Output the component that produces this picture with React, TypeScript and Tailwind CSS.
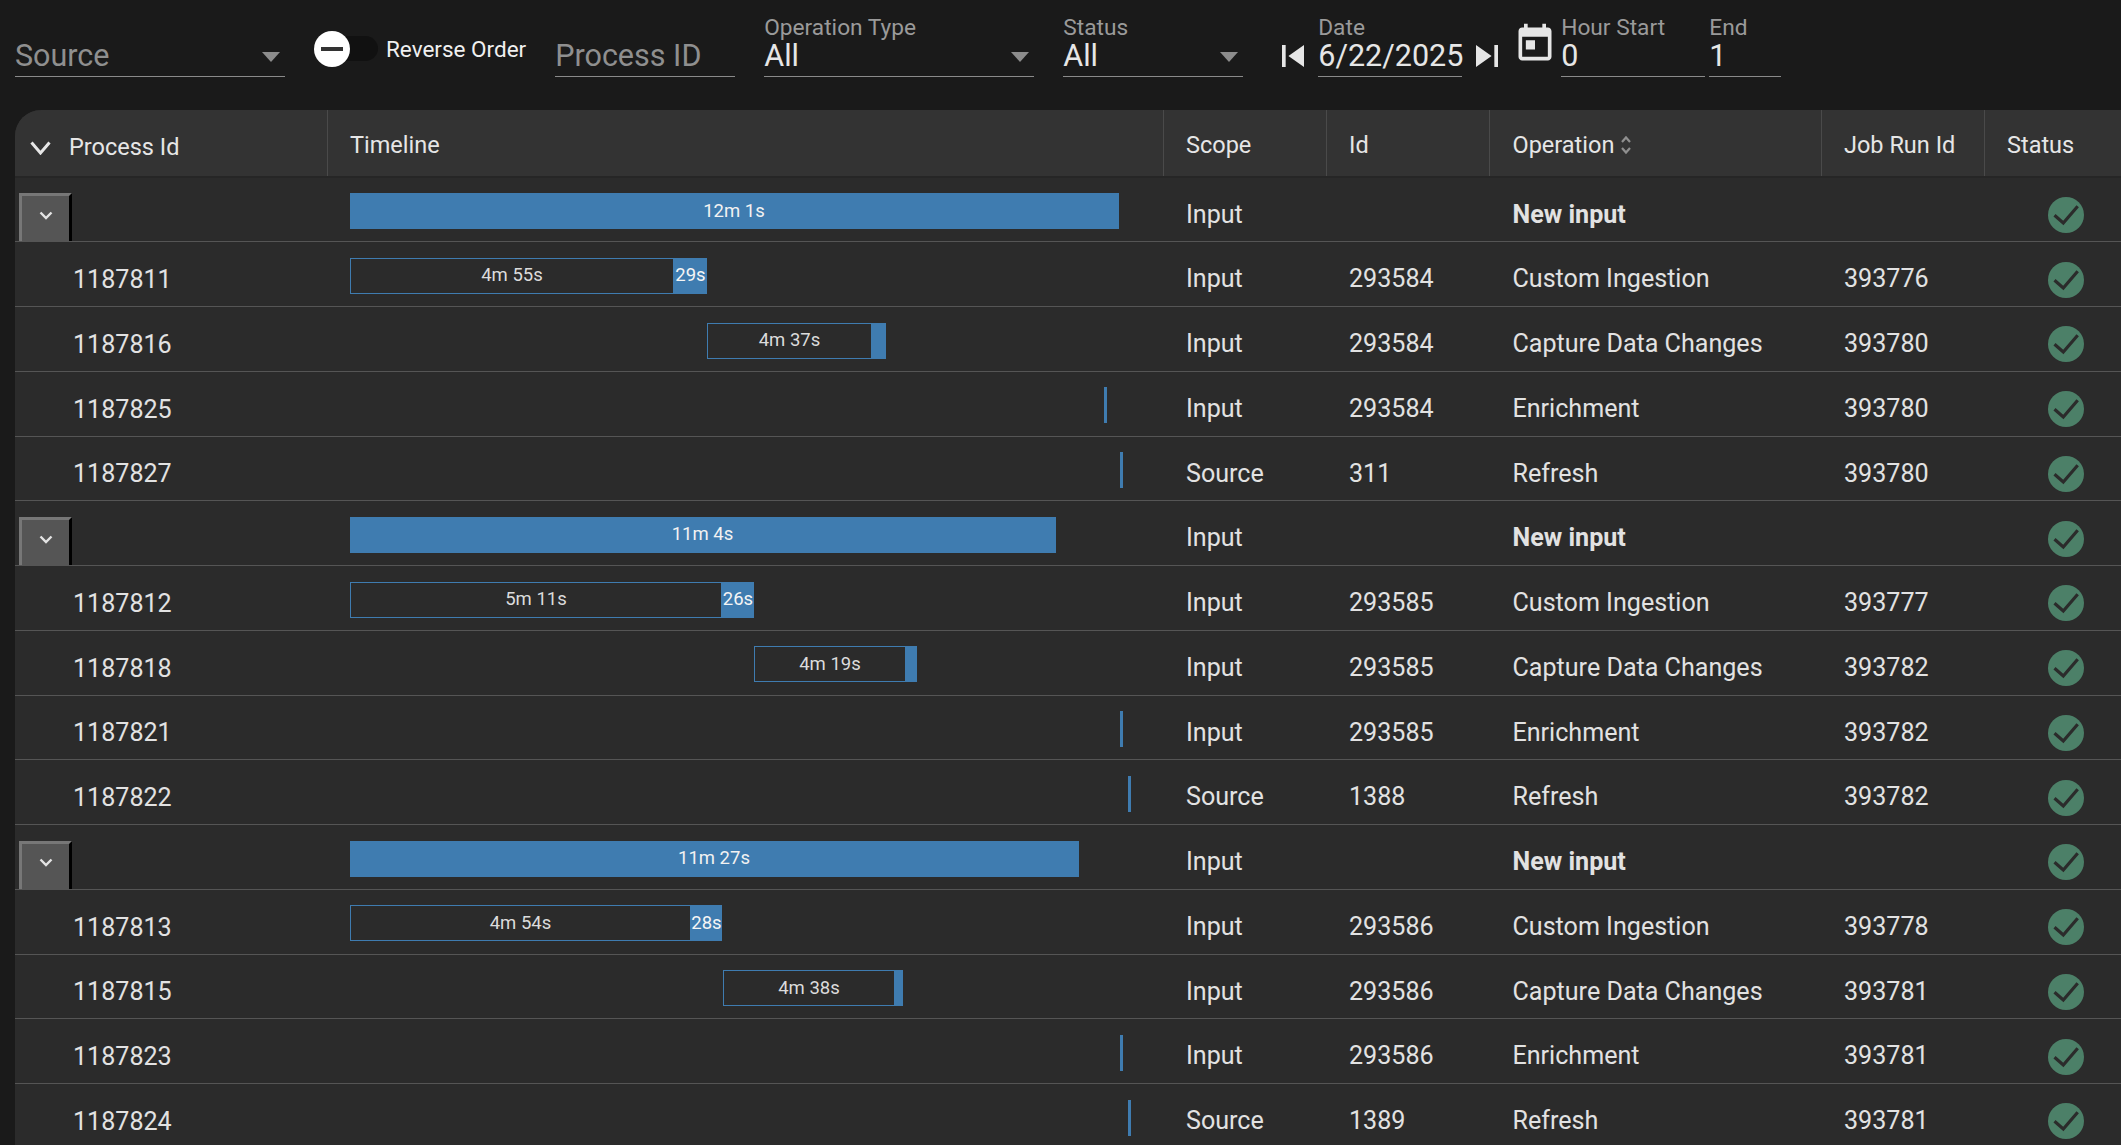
import React from "react";

type Bar =
  | { kind: "full"; cls: string; label: string }
  | { kind: "split"; outer: string; inner: string; fill: string; label: string; fillLabel?: string }
  | { kind: "tick"; cls: string };

type Row = {
  group?: boolean;
  pid?: string;
  bar: Bar;
  scope: string;
  id?: string;
  op: string;
  job?: string;
};

const rows: Row[] = [
  { group: true, bar: { kind: "full", cls: "w-[769px]", label: "12m 1s" }, scope: "Input", op: "New input" },
  { pid: "1187811", bar: { kind: "split", outer: "ml-0", inner: "w-[324px]", fill: "w-[33px]", label: "4m 55s", fillLabel: "29s" }, scope: "Input", id: "293584", op: "Custom Ingestion", job: "393776" },
  { pid: "1187816", bar: { kind: "split", outer: "ml-[357px]", inner: "w-[165px]", fill: "w-[14px]", label: "4m 37s" }, scope: "Input", id: "293584", op: "Capture Data Changes", job: "393780" },
  { pid: "1187825", bar: { kind: "tick", cls: "ml-[754px]" }, scope: "Input", id: "293584", op: "Enrichment", job: "393780" },
  { pid: "1187827", bar: { kind: "tick", cls: "ml-[770px]" }, scope: "Source", id: "311", op: "Refresh", job: "393780" },
  { group: true, bar: { kind: "full", cls: "w-[706px]", label: "11m 4s" }, scope: "Input", op: "New input" },
  { pid: "1187812", bar: { kind: "split", outer: "ml-0", inner: "w-[372px]", fill: "w-[32px]", label: "5m 11s", fillLabel: "26s" }, scope: "Input", id: "293585", op: "Custom Ingestion", job: "393777" },
  { pid: "1187818", bar: { kind: "split", outer: "ml-[404px]", inner: "w-[152px]", fill: "w-[11px]", label: "4m 19s" }, scope: "Input", id: "293585", op: "Capture Data Changes", job: "393782" },
  { pid: "1187821", bar: { kind: "tick", cls: "ml-[770px]" }, scope: "Input", id: "293585", op: "Enrichment", job: "393782" },
  { pid: "1187822", bar: { kind: "tick", cls: "ml-[778px]" }, scope: "Source", id: "1388", op: "Refresh", job: "393782" },
  { group: true, bar: { kind: "full", cls: "w-[729px]", label: "11m 27s" }, scope: "Input", op: "New input" },
  { pid: "1187813", bar: { kind: "split", outer: "ml-0", inner: "w-[341px]", fill: "w-[31px]", label: "4m 54s", fillLabel: "28s" }, scope: "Input", id: "293586", op: "Custom Ingestion", job: "393778" },
  { pid: "1187815", bar: { kind: "split", outer: "ml-[373px]", inner: "w-[172px]", fill: "w-[8px]", label: "4m 38s" }, scope: "Input", id: "293586", op: "Capture Data Changes", job: "393781" },
  { pid: "1187823", bar: { kind: "tick", cls: "ml-[770px]" }, scope: "Input", id: "293586", op: "Enrichment", job: "393781" },
  { pid: "1187824", bar: { kind: "tick", cls: "ml-[778px]" }, scope: "Source", id: "1389", op: "Refresh", job: "393781" },
];

const grid = "grid grid-cols-[312.5px_836px_163px_163.5px_331.5px_163px_1fr]";

function Caret() {
  return (
    <svg width="18" height="10" viewBox="0 0 18 10" className="absolute right-[5px] bottom-[14px]">
      <path d="M0 0h18L9 10z" fill="#8c8c8c" />
    </svg>
  );
}

function Field({ w, label, value, placeholder, caret, cls }: { w: string; label?: string; value?: string; placeholder?: string; caret?: boolean; cls?: string }) {
  return (
    <div className={`relative h-[77px] border-b border-[#8a8a8a] flex flex-col justify-end pb-[2px] ${w} ${cls ?? ""}`}>
      {label && <div className="text-[22.700px] leading-[26px] text-[#9a9a9a]">{label}</div>}
      {value && <div className="text-[30.500px] leading-[36px] mt-[-3px] text-[#e6e6e6]">{value}</div>}
      {placeholder && <div className="text-[30.500px] leading-[36px] text-[#8f8f8f]">{placeholder}</div>}
      {caret && <Caret />}
    </div>
  );
}

function HeaderCell({ children, cls }: { children: React.ReactNode; cls?: string }) {
  return (
    <div className={`flex items-center pl-[22.500px] pt-[5px] text-[23.500px] text-[#e6e6e6] border-r border-[#4a4a4a] ${cls ?? ""}`}>
      {children}
    </div>
  );
}

function Check() {
  return (
    <svg width="36" height="36" viewBox="0 0 36 36" className="ml-[63px] mt-[3px]">
      <circle cx="18" cy="18" r="18" fill="#4c8068" />
      <path d="M6.500 18.300 15.300 26 29.700 9.300" fill="none" stroke="#2b2b2b" strokeWidth="3.200" />
    </svg>
  );
}

function Timeline({ bar }: { bar: Bar }) {
  if (bar.kind === "full") {
    return (
      <div className={`h-[36px] bg-[#3f7cb0] flex items-center justify-center text-[18.500px] text-[#f2f2f2] pt-[1px] ${bar.cls}`}>
        {bar.label}
      </div>
    );
  }
  if (bar.kind === "tick") {
    return <div className={`h-[36px] w-[3px] bg-[#3f7cb0] ${bar.cls}`} />;
  }
  return (
    <div className={`flex h-[36px] ${bar.outer}`}>
      <div className={`border border-[#3f7cb0] flex items-center justify-center text-[18.500px] text-[#dcdcdc] pl-[1px] pt-[1px] ${bar.inner}`}>
        {bar.label}
      </div>
      <div className={`bg-[#3f7cb0] flex items-center justify-center text-[18.500px] text-[#f5f5f5] pl-[1px] pt-[1px] ${bar.fill}`}>
        {bar.fillLabel}
      </div>
    </div>
  );
}

function DataRow({ r, first }: { r: Row; first: boolean }) {
  const text = "flex items-center pl-[22.500px] pt-[10px] text-[25.100px] text-[#e2e2e2]";
  return (
    <div className={`${grid} h-[64.75px] border-b border-[#555555] ${first ? "h-[64.5px]" : ""}`}>
      <div className="flex items-end">
        {r.group ? (
          <div className="ml-[4px] h-[48px] w-[53px] bg-[#555555] border-t-[3px] border-l-[3px] border-r-[3px] border-t-[#777777] border-l-[#777777] border-r-black flex items-center justify-center pb-[7px]">
            <svg width="14" height="9" viewBox="0 0 14 9">
              <path d="M1.500 1.500 7 7l5.500-5.500" fill="none" stroke="#e4e4e4" strokeWidth="2.400" />
            </svg>
          </div>
        ) : (
          <div className="pl-[58px] pb-[11px] text-[25.100px] leading-[30px] text-[#e2e2e2]">{r.pid}</div>
        )}
      </div>
      <div className="pl-[22px] pt-[15.500px]">
        <Timeline bar={r.bar} />
      </div>
      <div className={text}>{r.scope}</div>
      <div className={text}>{r.id}</div>
      <div className={r.group ? `${text} font-bold` : text}>{r.op}</div>
      <div className={text}>{r.job}</div>
      <div className="flex items-center pt-[8px]">
        <Check />
      </div>
    </div>
  );
}

export default function App() {
  return (
    <div className="w-[2121px] h-[1145px] overflow-hidden bg-[#1a1a1a] font-['Roboto',sans-serif]">
      <div className="flex items-start h-[110px] pl-[15px]">
        <Field w="w-[270px]" placeholder="Source" caret />
        <div className="relative ml-[29px] mt-[36px] h-[25px] w-[64px] rounded-full bg-[#111111]">
          <div className="absolute left-0 top-[-5px] h-[36px] w-[36px] rounded-full bg-white flex items-center justify-center">
            <div className="h-[4px] w-[22px] bg-[#333333]" />
          </div>
        </div>
        <div className="ml-[8px] mt-[34px] text-[22.500px] leading-[30px] text-[#f0f0f0]">Reverse Order</div>
        <Field w="w-[180px]" placeholder="Process ID" cls="ml-[29px]" />
        <Field w="w-[270px]" label="Operation Type" value="All" caret cls="ml-[29px]" />
        <Field w="w-[180px]" label="Status" value="All" caret cls="ml-[29px]" />
        <svg width="44" height="44" viewBox="0 0 24 24" className="ml-[27.500px] mt-[34px]" fill="#e6e6e6">
          <path d="M6 6h2v12H6zm3.500 6l8.500 6V6z" />
        </svg>
        <Field w="w-[144px]" label="Date" value="6/22/2025" cls="ml-[3.500px]" />
        <svg width="44" height="44" viewBox="0 0 24 24" className="ml-[3px] mt-[34px]" fill="#e6e6e6">
          <path d="M6 18l8.500-6L6 6v12zM16 6v12h2V6h-2z" />
        </svg>
        <svg width="44" height="44" viewBox="0 0 24 24" className="ml-[3.500px] mt-[22px]" fill="#e6e6e6">
          <path d="M19 3h-1V1h-2v2H8V1H6v2H5c-1.110 0-1.990.900-1.990 2L3 19c0 1.100.890 2 2 2h14c1.100 0 2-.900 2-2V5c0-1.100-.900-2-2-2zm0 16H5V8h14v11zM7 10h5v5H7z" />
        </svg>
        <Field w="w-[144px]" label="Hour Start" value="0" cls="ml-[4.500px]" />
        <Field w="w-[72px]" label="End" value="1" cls="ml-[4px]" />
      </div>

      <div className="ml-[15px] h-[1035px] rounded-tl-[26px] bg-[#2b2b2b] overflow-hidden">
        <div className={`${grid} h-[67.5px] bg-[#333333] border-b-2 border-[#262626]`}>
          <div className="flex items-center pl-[15px] pt-[10px] text-[23.500px] text-[#e6e6e6] border-r border-[#4a4a4a]">
            <svg width="21" height="14" viewBox="0 0 21 14" className="mr-[18px]">
              <path d="M1.500 1.500 10.500 12l9-10.500" fill="none" stroke="#e6e6e6" strokeWidth="3" />
            </svg>
            Process Id
          </div>
          <HeaderCell>Timeline</HeaderCell>
          <HeaderCell>Scope</HeaderCell>
          <HeaderCell>Id</HeaderCell>
          <HeaderCell>
            Operation
            <svg width="12" height="20" viewBox="0 0 12 20" className="ml-[6px]">
              <path d="M2 7 6 2.500 10 7M2 13l4 4.500 4-4.500" fill="none" stroke="#8f8f8f" strokeWidth="2.200" />
            </svg>
          </HeaderCell>
          <HeaderCell>Job Run Id</HeaderCell>
          <HeaderCell cls="border-r-0">Status</HeaderCell>
        </div>
        {rows.map((r, i) => (
          <DataRow key={i} r={r} first={i === 0} />
        ))}
      </div>
    </div>
  );
}
